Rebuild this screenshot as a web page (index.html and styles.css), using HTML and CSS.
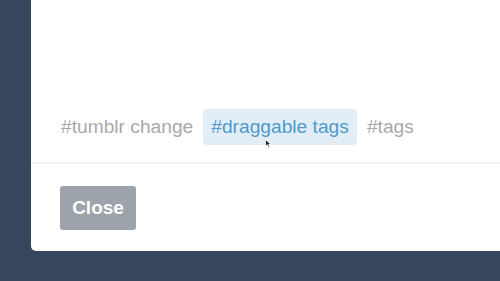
FILE: index.html
```html
<!DOCTYPE html>
<html>
<head>
<meta charset="utf-8">
<link rel="stylesheet" href="styles.css">
</head>
<body>
<div class="panel">
  <div class="tags">
    <span class="tag">#tumblr change</span>
    <span class="tag tag-active">#draggable tags</span>
    <span class="tag">#tags</span>
    <svg class="cursor" width="7" height="10" viewBox="0 0 7 10"><path d="M0.5 0.5 L0.5 7.5 L2.3 5.8 L3.6 8.8 L4.8 8.3 L3.6 5.4 L6 5.4 Z" fill="#222" stroke="#fff" stroke-width="0.8"/></svg>
  </div>
  <div class="divider"></div>
  <div class="footer">
    <button class="btn">Close</button>
  </div>
</div>
</body>
</html>
```
FILE: styles.css
```css
html, body {
  margin: 0;
  padding: 0;
  background: #36465d;
  width: 500px;
  height: 281px;
  overflow: hidden;
  font-family: "Liberation Sans", Arial, sans-serif;
}
.panel {
  margin-left: 31px;
  width: 469px;
  height: 251px;
  background: #fff;
  border-bottom-left-radius: 5px;
  display: flex;
  flex-direction: column;
}
.tags {
  position: relative;
  display: flex;
  align-items: center;
  gap: 2px;
  padding: 109px 0 0 22px;
  height: 36px;
}
.tag {
  font-size: 19.2px;
  color: #a9a9a9;
  padding: 0 8px;
  height: 36px;
  line-height: 36px;
  border-radius: 4px;
  white-space: nowrap;
}
.tag-active {
  background: #e1eef7;
  color: #4d9acb;
}
.cursor {
  position: absolute;
  left: 234px;
  top: 139px;
}
.divider {
  margin-top: 17px;
  height: 2px;
  background: #f3f3f3;
}
.footer {
  padding: 22px 0 0 29px;
}
.btn {
  width: 76px;
  height: 44px;
  border: none;
  border-radius: 3px;
  background: #9ca3ab;
  color: #fff;
  font-family: "Liberation Sans", Arial, sans-serif;
  font-weight: bold;
  font-size: 19px;
  padding: 0;
}
```
